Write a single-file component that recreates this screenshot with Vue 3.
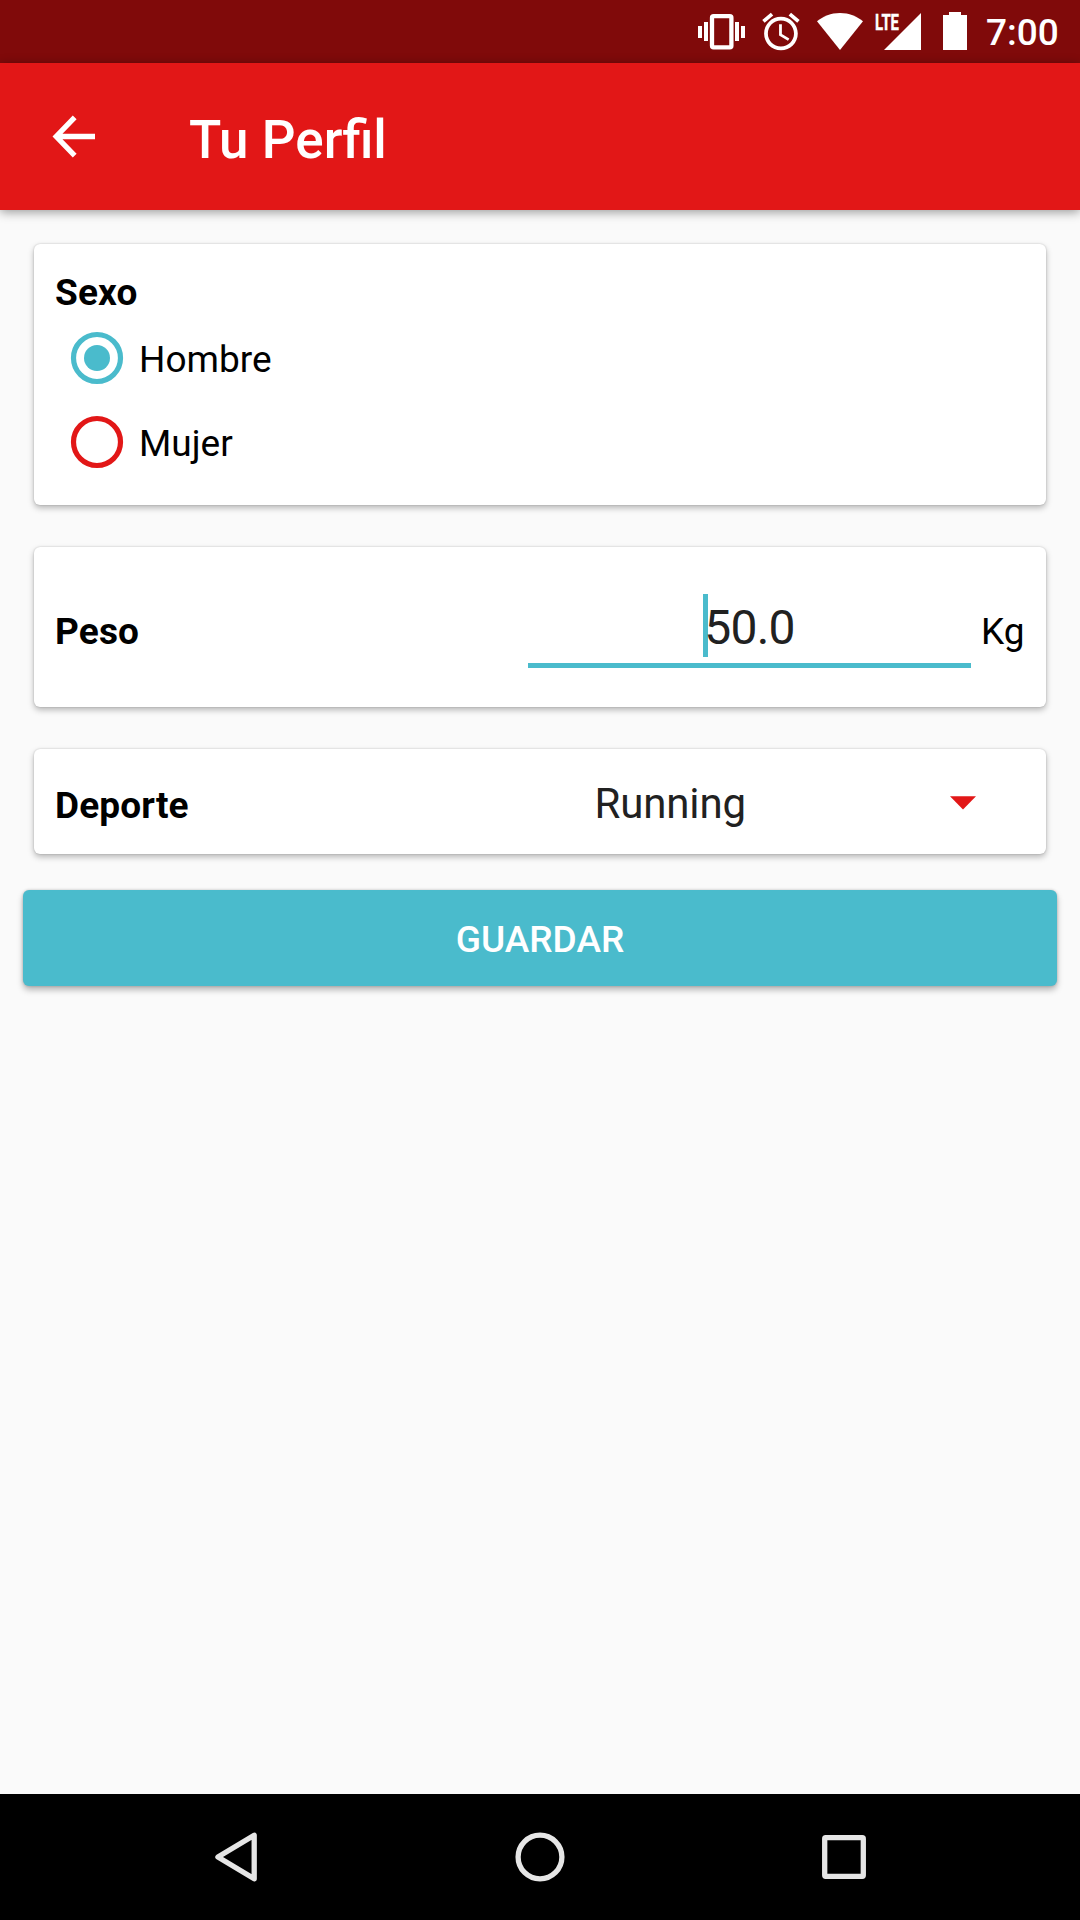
<script setup>
import { ref } from "vue";

const time = ref("7:00");
const sexos = ["Hombre", "Mujer"];
const sexo = ref("Hombre");
const peso = ref("50.0");
const deporte = ref("Running");
</script>

<template>
  <div class="screen">
    <div class="status-bar">
      <svg class="vibrate" width="48" height="63" viewBox="0 0 48 63">
        <rect x="14" y="16.2" width="19.4" height="31.2" rx="1.6" fill="none" stroke="#fff" stroke-width="4.3" />
        <path d="M0 26h4v12H0zM6 22h4v19H6zM37 22h4v19h-4zM43 26h4v12h-4z" fill="#fff" />
      </svg>
      <svg class="alarm" width="38" height="63" viewBox="0 0 38 63">
        <path
          transform="translate(-3.5 9.2) scale(1.87)"
          fill="#fff"
          d="M22 5.72l-4.6-3.86-1.29 1.53 4.6 3.86L22 5.72zM7.88 3.39L6.6 1.86 2 5.71l1.29 1.53 4.59-3.85zM12.5 8H11v6l4.75 2.85.75-1.23-4-2.37V8zM12 4c-4.97 0-9 4.03-9 9s4.02 9 9 9c4.97 0 9-4.03 9-9s-4.03-9-9-9zm0 16c-3.87 0-7-3.13-7-7s3.13-7 7-7 7 3.13 7 7-3.13 7-7 7z"
        />
      </svg>
      <svg class="wifi" width="46" height="63" viewBox="0 0 46 63">
        <path d="M23 50L0 21.3C6 16.500 14 13 23 13s17 3.500 23 8.300z" fill="#fff" />
      </svg>
      <svg class="signal" width="46" height="63" viewBox="0 0 46 63">
        <text x="0" y="29.700" textLength="24" lengthAdjust="spacingAndGlyphs" class="lte">LTE</text>
        <path d="M46 13v37H9z" fill="#fff" />
      </svg>
      <svg class="battery" width="24" height="63" viewBox="0 0 24 63">
        <path d="M6 12h12v3h6v35H0V15h6z" fill="#fff" />
      </svg>
      <span class="time">{{ time }}</span>
    </div>

    <header class="toolbar">
      <svg class="back" width="44" height="44" viewBox="0 0 44 44">
        <path d="M22.700 2.300L4.200 21.500l18.500 19.200M4.500 21.500H43" fill="none" stroke="#fff" stroke-width="5.300" />
      </svg>
      <h1>Tu Perfil</h1>
    </header>

    <main class="content">
      <section class="card card-sexo">
        <div class="label">Sexo</div>
        <div v-for="item in sexos" :key="item" class="radio" :class="{ checked: sexo === item }" @click="sexo = item">
          <svg width="54" height="54" viewBox="0 0 54 54">
            <circle cx="27" cy="27" r="23.500" fill="none" stroke="currentColor" stroke-width="5.200" />
            <circle v-if="sexo === item" cx="27" cy="27" r="13" fill="currentColor" />
          </svg>
          <span>{{ item }}</span>
        </div>
      </section>

      <section class="card card-peso">
        <div class="label">Peso</div>
        <div class="field">
          <span class="value">{{ peso }}</span>
        </div>
        <span class="unit">Kg</span>
      </section>

      <section class="card card-deporte">
        <div class="label">Deporte</div>
        <div class="spinner">
          <span>{{ deporte }}</span>
          <svg width="26" height="14" viewBox="0 0 26 14">
            <path d="M0 0.300h26L13 13.500z" fill="#e21717" />
          </svg>
        </div>
      </section>

      <button class="save" type="button">GUARDAR</button>
    </main>

    <nav class="nav-bar">
      <svg width="50" height="50" viewBox="0 0 50 50">
        <path d="M43.200 3.200v43.600L6.900 25z" />
      </svg>
      <svg width="50" height="50" viewBox="0 0 50 50">
        <circle cx="25" cy="25" r="21.900" />
      </svg>
      <svg width="50" height="50" viewBox="0 0 50 50">
        <rect x="5.700" y="5.700" width="38.600" height="38.600" rx="1" />
      </svg>
    </nav>
  </div>
</template>

<style>
body {
  margin: 0;
  background: #fafafa;
}
</style>

<style scoped>
.screen {
  display: flex;
  flex-direction: column;
  width: 1080px;
  height: 1920px;
  overflow: hidden;
  background: #fafafa;
  color: #000;
  font-family: Roboto, "Liberation Sans", sans-serif;
  font-size: 37px;
  line-height: 42px;
}

svg {
  display: block;
  flex: none;
}

.status-bar {
  display: flex;
  justify-content: flex-end;
  height: 63px;
  padding-right: 21px;
  background: #800a0a;
}

.alarm {
  margin-left: 16px;
}

.wifi {
  margin-left: 17px;
}

.signal {
  margin-left: 12px;
}

.lte {
  fill: #fff;
  stroke: #fff;
  stroke-width: 0.4px;
  font-size: 22px;
  font-weight: 700;
}

.battery {
  margin-left: 22px;
}

.time {
  width: 73px;
  margin-left: 19px;
  padding-top: 12px;
  color: #fff;
  font-weight: 500;
  white-space: nowrap;
}

.toolbar {
  display: flex;
  align-items: center;
  height: 147px;
  padding-left: 52px;
  background: #e21717;
  box-shadow: 0 2px 10px rgba(0, 0, 0, 0.4);
}

.toolbar h1 {
  margin: 6px 0 0 93px;
  color: #fff;
  font-size: 53px;
  font-weight: 500;
  line-height: 64px;
}

.content {
  display: flex;
  flex: 1;
  flex-direction: column;
  padding: 34px 23px 0;
}

.card {
  box-sizing: border-box;
  margin: 0 11px 42px;
  padding: 0 21px;
  border-radius: 6px;
  background: #fff;
  box-shadow: 0 3px 6px rgba(0, 0, 0, 0.27), 0 0 2px rgba(0, 0, 0, 0.2);
}

.label {
  font-weight: 700;
  letter-spacing: 0.15px;
}

.card-sexo {
  height: 261px;
  padding-top: 28px;
}

.radio {
  display: flex;
  align-items: center;
  height: 84px;
  padding-left: 15px;
  color: #e21717;
}

.radio.checked {
  color: #4abbcc;
}

.card-sexo .label {
  margin-bottom: 2px;
}

.radio span {
  margin-left: 15px;
  padding-top: 3px;
  color: #000;
}

.card-peso {
  display: flex;
  height: 160px;
}

.card-peso .label,
.unit {
  padding-top: 64px;
}

.field {
  box-sizing: border-box;
  width: 443px;
  height: 121px;
  margin-left: auto;
  padding-top: 49px;
  border-bottom: 5px solid #4abbcc;
  color: #212121;
  font-size: 48px;
  line-height: 64px;
  text-align: center;
}

.value {
  position: relative;
  z-index: 0;
  letter-spacing: -0.8px;
}

/* text cursor */
.value::before {
  content: "";
  position: absolute;
  z-index: -1;
  top: -5px;
  left: -1px;
  width: 5px;
  height: 63px;
  background: #4abbcc;
}

.unit {
  width: 44px;
  margin-left: 10px;
}

.card-deporte {
  display: flex;
  height: 105px;
  margin-bottom: 36px;
}

.card-deporte .label {
  padding-top: 36px;
}

.spinner {
  display: flex;
  align-items: flex-start;
  justify-content: space-between;
  width: 381px;
  margin-left: auto;
  margin-right: 49.5px;
  padding-top: 30px;
  color: #212121;
  font-size: 42px;
  line-height: 50px;
  letter-spacing: -0.15px;
}

.spinner svg {
  margin-top: 17px;
}

.save {
  height: 96px;
  padding: 3px 0 0;
  border: 0;
  border-radius: 6px;
  background: #4abbcc;
  box-shadow: 0 4px 6px rgba(0, 0, 0, 0.27), 0 0 3px rgba(0, 0, 0, 0.2);
  color: #fff;
  font: inherit;
  font-weight: 500;
}

.nav-bar {
  display: flex;
  align-items: center;
  justify-content: center;
  gap: 254px;
  height: 126px;
  background: #000;
}

.nav-bar svg {
  fill: none;
  stroke: #e6e6e6;
  stroke-width: 5.3;
  stroke-linejoin: round;
}
</style>
